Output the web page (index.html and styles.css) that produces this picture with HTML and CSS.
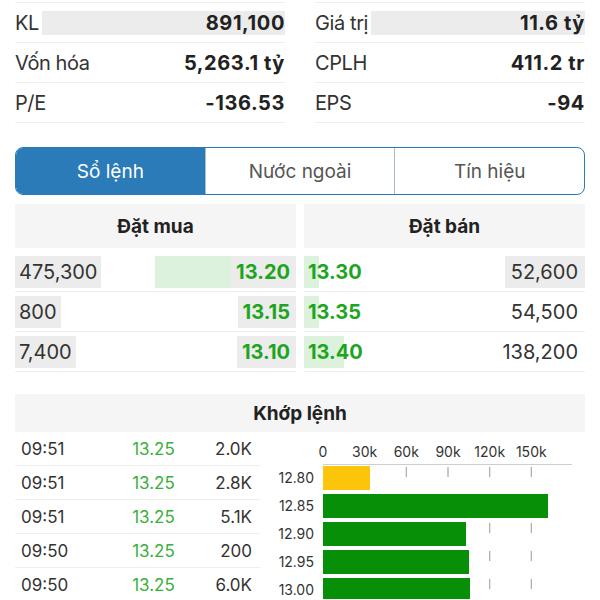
FILE: index.html
```html
<!DOCTYPE html>
<html lang="vi">
<head>
    <meta charset="UTF-8">
    <meta name="viewport" content="width=device-width, initial-scale=1.0">
    <title>Sổ lệnh</title>
    <link rel="stylesheet" href="styles.css">
</head>
<body>
    <div class="page">
        <section class="stats">
            <div class="stat-col">
                <div class="stat-row"><span class="stat-label">KL</span><span class="stat-value flash">891,100</span></div>
                <div class="stat-row"><span class="stat-label">Vốn hóa</span><span class="stat-value">5,263.1 tỷ</span></div>
                <div class="stat-row"><span class="stat-label">P/E</span><span class="stat-value">-136.53</span></div>
            </div>
            <div class="stat-col">
                <div class="stat-row"><span class="stat-label">Giá trị</span><span class="stat-value flash">11.6 tỷ</span></div>
                <div class="stat-row"><span class="stat-label">CPLH</span><span class="stat-value">411.2 tr</span></div>
                <div class="stat-row"><span class="stat-label">EPS</span><span class="stat-value">-94</span></div>
            </div>
        </section>

        <nav class="tabs">
            <div class="tab active">Sổ lệnh</div>
            <div class="tab">Nước ngoài</div>
            <div class="tab">Tín hiệu</div>
        </nav>

        <section class="book">
            <div class="book-side buy">
                <div class="book-head">Đặt mua</div>
                <div class="book-row">
                    <span class="vol-bar" style="width: 141px"></span>
                    <span class="qty hl">475,300</span>
                    <span class="price hl">13.20</span>
                </div>
                <div class="book-row">
                    <span class="vol-bar" style="width: 1px"></span>
                    <span class="qty hl">800</span>
                    <span class="price hl">13.15</span>
                </div>
                <div class="book-row">
                    <span class="vol-bar" style="width: 2px"></span>
                    <span class="qty hl">7,400</span>
                    <span class="price hl">13.10</span>
                </div>
            </div>
            <div class="book-side sell">
                <div class="book-head">Đặt bán</div>
                <div class="book-row">
                    <span class="vol-bar" style="width: 15px"></span>
                    <span class="price">13.30</span>
                    <span class="qty hl">52,600</span>
                </div>
                <div class="book-row">
                    <span class="vol-bar" style="width: 15px"></span>
                    <span class="price">13.35</span>
                    <span class="qty">54,500</span>
                </div>
                <div class="book-row">
                    <span class="vol-bar" style="width: 40px"></span>
                    <span class="price">13.40</span>
                    <span class="qty">138,200</span>
                </div>
            </div>
        </section>

        <section class="match">
            <div class="match-head">Khớp lệnh</div>
            <div class="match-body">
                <div class="trades">
                    <div class="trade-row"><span class="t-time">09:51</span><span class="t-price">13.25</span><span class="t-vol">2.0K</span></div>
                    <div class="trade-row"><span class="t-time">09:51</span><span class="t-price">13.25</span><span class="t-vol">2.8K</span></div>
                    <div class="trade-row"><span class="t-time">09:51</span><span class="t-price">13.25</span><span class="t-vol">5.1K</span></div>
                    <div class="trade-row"><span class="t-time">09:50</span><span class="t-price">13.25</span><span class="t-vol">200</span></div>
                    <div class="trade-row"><span class="t-time">09:50</span><span class="t-price">13.25</span><span class="t-vol">6.0K</span></div>
                </div>

                <!-- khối lượng theo giá -->
                <svg class="chart" width="323" height="167" viewBox="0 0 323 167">
                    <g class="grid">
                        <line x1="102.7" y1="35" x2="102.7" y2="167"/>
                        <line x1="144.3" y1="35" x2="144.3" y2="167"/>
                        <line x1="186" y1="35" x2="186" y2="167"/>
                        <line x1="227.7" y1="35" x2="227.7" y2="167"/>
                        <line x1="269.3" y1="35" x2="269.3" y2="167"/>
                    </g>
                    <line class="axis" x1="61" y1="32.5" x2="310" y2="32.5"/>
                    <g class="axis-labels">
                        <text x="61" y="25">0</text>
                        <text x="102.7" y="25">30k</text>
                        <text x="144.3" y="25">60k</text>
                        <text x="186" y="25">90k</text>
                        <text x="227.7" y="25">120k</text>
                        <text x="269.3" y="25">150k</text>
                    </g>
                    <rect class="bar ref" x="61" y="34" width="47" height="24"/>
                    <rect class="bar" x="61" y="62" width="225" height="24"/>
                    <rect class="bar" x="61" y="90" width="143" height="24"/>
                    <rect class="bar" x="61" y="118" width="146" height="24"/>
                    <rect class="bar" x="61" y="146" width="147" height="24"/>
                    <g class="price-labels">
                        <text x="52" y="51">12.80</text>
                        <text x="52" y="79">12.85</text>
                        <text x="52" y="107">12.90</text>
                        <text x="52" y="135">12.95</text>
                        <text x="52" y="163">13.00</text>
                    </g>
                </svg>
            </div>
        </section>
    </div>
</body>
</html>
```

FILE: styles.css
```css
body {
    margin: 0;
    padding: 0;
    background: #ffffff;
    font-family: "Inter", "Liberation Sans", sans-serif;
    color: #333;
    overflow: hidden;
}

.page {
    padding: 0 15px;
}

/* thong tin chung */
.stats {
    display: grid;
    grid-template-columns: 1fr 1fr;
    column-gap: 30px;
    padding-top: 2px;
}

.stat-col {
    border-top: 1px solid #efefef;
}

.stat-row {
    display: flex;
    align-items: center;
    height: 40px;
    box-sizing: border-box;
    border-bottom: 1px solid #efefef;
    font-size: 20px;
    padding-top: 1px;
}

.stat-label {
    color: #333;
    letter-spacing: -0.4px;
}

.stat-value {
    flex: 1;
    text-align: right;
    font-weight: bold;
    color: #222;
    height: 24px;
    line-height: 24px;
    letter-spacing: 0.6px;
}

.stat-value.flash {
    background: #ececec;
    margin-left: 3px;
}

/* tabs */
.tabs {
    display: flex;
    margin-top: 24px;
    height: 48px;
    box-sizing: border-box;
    border: 1px solid #2b7bb9;
    border-radius: 8px;
    overflow: hidden;
}

.tab {
    flex: 1;
    display: flex;
    align-items: center;
    justify-content: center;
    font-size: 19px;
    color: #555;
    border-left: 1px solid #a9bccd;
}

.tab:first-child {
    border-left: none;
}

.tab.active {
    background: #2b7bb9;
    color: #ffffff;
}

/* so lenh */
.book {
    display: grid;
    grid-template-columns: 1fr 1fr;
    column-gap: 8px;
    margin-top: 9px;
}

.book-head {
    height: 44px;
    display: flex;
    align-items: center;
    justify-content: center;
    background: #f5f5f5;
    font-size: 19px;
    font-weight: bold;
    color: #222;
    margin-bottom: 4px;
}

.book-row {
    position: relative;
    display: flex;
    align-items: center;
    justify-content: space-between;
    height: 40px;
    box-sizing: border-box;
    border-bottom: 1px solid #efefef;
    font-size: 20px;
}

.vol-bar {
    position: absolute;
    top: 4px;
    height: 32px;
    background: #dcf2dc;
}

.buy .vol-bar {
    right: 0;
}

.sell .vol-bar {
    left: 0;
}

.qty,
.price {
    position: relative;
    height: 32px;
    line-height: 32px;
}

.hl {
    background: #ececec;
}

.qty {
    padding: 0 4px;
    color: #333;
}

.price {
    font-weight: bold;
    color: #1ea51e;
}

.buy .price {
    padding: 0 6px 0 5px;
}

.sell .price {
    padding-left: 4px;
}

.sell .qty {
    padding: 0 7px 0 6px;
}

/* khop lenh */
.match {
    margin-top: 22px;
}

.match-head {
    height: 38px;
    display: flex;
    align-items: center;
    justify-content: center;
    background: #f5f5f5;
    font-size: 19px;
    font-weight: bold;
    color: #222;
}

.match-body {
    display: grid;
    grid-template-columns: 245px 1fr;
    column-gap: 2px;
}

.trade-row {
    display: grid;
    grid-template-columns: 103px 71px 1fr;
    align-items: center;
    height: 34px;
    box-sizing: border-box;
    border-bottom: 1px solid #efefef;
    font-size: 17px;
    padding-top: 1px;
}

.t-time {
    padding-left: 6px;
    color: #333;
}

.t-price {
    text-align: center;
    color: #3aaf3a;
}

.t-vol {
    text-align: right;
    padding-right: 8px;
    color: #333;
}

.chart {
    display: block;
    font-family: "Inter", "Liberation Sans", sans-serif;
    font-size: 14px;
}

.chart .grid line {
    stroke: #a8a8a8;
    stroke-width: 1.2;
    stroke-dasharray: 10 18;
}

.chart .axis {
    stroke: #cfcfcf;
    stroke-width: 1;
}

.chart .axis-labels text {
    text-anchor: middle;
    fill: #333;
}

.chart .price-labels text {
    text-anchor: end;
    fill: #333;
}

.chart .bar {
    fill: #078f07;
}

.chart .bar.ref {
    fill: #fcc50a;
}
```
